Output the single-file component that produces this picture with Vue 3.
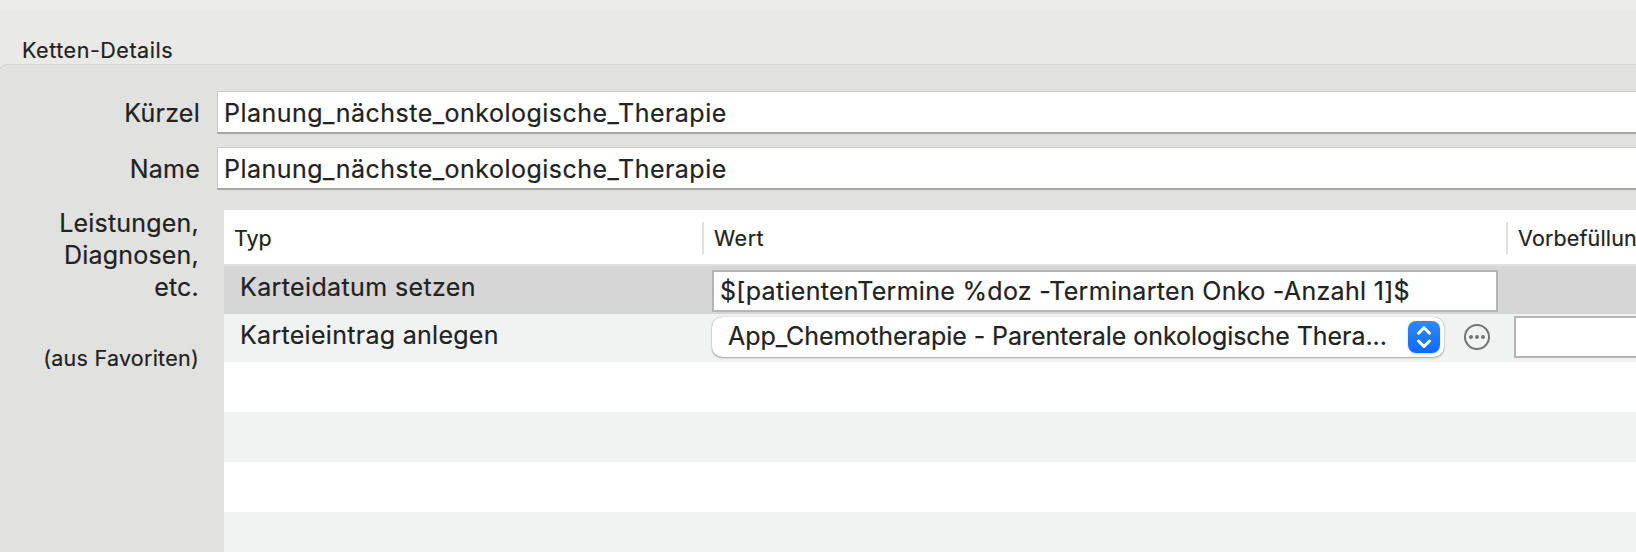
<template>
  <div class="window">
    <div class="toolbar-edge"></div>
    <div class="group-title">Ketten-Details</div>
    <div class="group">
      <div class="form-row">
        <label class="form-label">Kürzel</label>
        <div class="text-input">{{ kuerzel }}</div>
      </div>
      <div class="form-row">
        <label class="form-label">Name</label>
        <div class="text-input">{{ name }}</div>
      </div>
      <div class="list-row">
        <div class="list-label">
          <div>Leistungen,</div>
          <div>Diagnosen,</div>
          <div>etc.</div>
          <div class="hint">(aus Favoriten)</div>
        </div>
        <div class="table">
          <div class="table-head">
            <div class="th typ">Typ</div>
            <div class="th wert">Wert</div>
            <div class="th vor">Vorbefüllun</div>
          </div>
          <div class="row selected">
            <div class="cell datum">Karteidatum setzen</div>
            <div class="value">
              <div class="cell-input">{{ termine }}</div>
            </div>
          </div>
          <div class="row alt">
            <div class="cell eintrag">Karteieintrag anlegen</div>
            <div class="value">
              <div class="popup">
                <span>{{ karteiTyp }}</span>
                <div class="popup-button">
                  <svg width="32" height="32" viewBox="0 0 32 32">
                    <path d="M10.5 12.2 L16 6.7 L21.5 12.2 M10.5 20 L16 25.5 L21.5 20" />
                  </svg>
                </div>
              </div>
              <svg class="more" width="26" height="26" viewBox="0 0 26 26">
                <circle class="ring" cx="13" cy="13" r="12" />
                <circle cx="7" cy="13" r="2" />
                <circle cx="13" cy="13" r="2" />
                <circle cx="19" cy="13" r="2" />
              </svg>
            </div>
            <div class="cell-input prefill"></div>
          </div>
          <div v-for="n in 4" :key="n" class="row empty" :class="{ alt: n % 2 === 0 }"></div>
        </div>
      </div>
    </div>
  </div>
</template>

<script setup>
import { ref } from 'vue'

const kuerzel = ref('Planung_nächste_onkologische_Therapie')
const name = ref('Planung_nächste_onkologische_Therapie')
const termine = ref('$[patientenTermine %doz -Terminarten Onko -Anzahl 1]$')
const karteiTyp = ref('App_Chemotherapie - Parenterale onkologische Thera...')
</script>

<style>
body {
  margin: 0;
  overflow: hidden;
}
</style>

<style scoped>
.window {
  width: 1636px;
  height: 552px;
  overflow: hidden;
  background: #e9e9e7;
  color: #222;
  font-family: Inter, 'Liberation Sans', sans-serif;
  font-size: 25px;
  white-space: nowrap;
  -webkit-text-stroke: 0.2px #222;
}

.window * {
  box-sizing: border-box;
}

.toolbar-edge {
  height: 10px;
  background: #ebebea;
}

.group-title {
  height: 54px;
  padding: 26px 0 0 22px;
  font-size: 21.5px;
  line-height: 28px;
  letter-spacing: 0.53px;
}

.group {
  width: 1660px;
  height: 500px;
  margin-left: -2px;
  padding: 26px 0 0 1px;
  border: 1px solid #d5d5d3;
  border-radius: 9px;
  background: #e1e1df;
}

.form-row {
  display: flex;
  height: 43px;
  margin-bottom: 13px;
}

.form-label {
  width: 200px;
  margin-right: 17px;
  padding-top: 1px;
  line-height: 42px;
  text-align: right;
  letter-spacing: 0.25px;
}

.text-input {
  flex: 1;
  padding-left: 6px;
  border: 1px solid #c8c8c7;
  border-bottom: 2px solid #a5a5a4;
  background: #fff;
  line-height: 42px;
  letter-spacing: 0.48px;
}

.list-row {
  display: flex;
  padding-top: 7px;
}

.list-label {
  width: 199px;
  margin: -3px 25px 0 0;
  line-height: 32px;
  text-align: right;
  letter-spacing: 0.2px;
}

.list-label .hint {
  margin-top: 39px;
  font-size: 21.5px;
  letter-spacing: 0.25px;
}

.table {
  width: 1430px;
  flex-shrink: 0;
  background: #fff;
}

.table-head {
  display: flex;
  height: 56px;
  padding-top: 12px;
  border-bottom: 2px solid #e0e0e0;
  font-size: 21.5px;
}

.th {
  height: 32px;
  padding-left: 10px;
  line-height: 32px;
}

.th.typ {
  width: 480px;
  border-right: 2px solid #e0e0e0;
}

.th.wert {
  width: 804px;
  border-right: 2px solid #e0e0e0;
  letter-spacing: 0.5px;
}

.th.vor {
  letter-spacing: 0.15px;
}

.row {
  display: flex;
  height: 48px;
}

.row.selected {
  background: #d6d6d6;
}

.row.alt {
  background: #f1f3f3;
}

.row.empty {
  height: 50px;
}

.cell {
  flex: none;
  width: 488px;
  padding-left: 16px;
  line-height: 42px;
}

.cell.datum {
  letter-spacing: 0.37px;
}

.cell.eintrag {
  letter-spacing: 0.29px;
}

.value {
  display: flex;
  flex: none;
  width: 802px;
}

.cell-input {
  flex: none;
  width: 786px;
  height: 42px;
  margin-top: 4px;
  padding-left: 6px;
  border: 2px solid #b4b4b4;
  background: #fff;
  line-height: 38px;
  letter-spacing: 0.3px;
}

.prefill {
  margin-top: 2px;
}

.popup {
  display: flex;
  justify-content: space-between;
  width: 732px;
  height: 40px;
  margin-top: 3px;
  padding: 4px 4px 4px 16px;
  border-radius: 10px;
  background: #fff;
  box-shadow: 0 0 1px rgba(0, 0, 0, 0.4), 0 1px 2px rgba(0, 0, 0, 0.3);
  line-height: 30px;
  letter-spacing: -0.06px;
}

.popup-button {
  width: 32px;
  height: 32px;
  border-radius: 8px;
  background: linear-gradient(#2f87fb, #0e6bf8);
  box-shadow: 0 1px 2px rgba(14, 107, 248, 0.3);
}

.popup-button svg {
  display: block;
  fill: none;
  stroke: #fff;
  stroke-width: 3;
  stroke-linecap: round;
  stroke-linejoin: round;
}

.more {
  margin: 7px 0 0 20px;
  margin-top: 10px;
  fill: #737575;
}

.more .ring {
  fill: none;
  stroke: #737575;
  stroke-width: 2;
}
</style>
